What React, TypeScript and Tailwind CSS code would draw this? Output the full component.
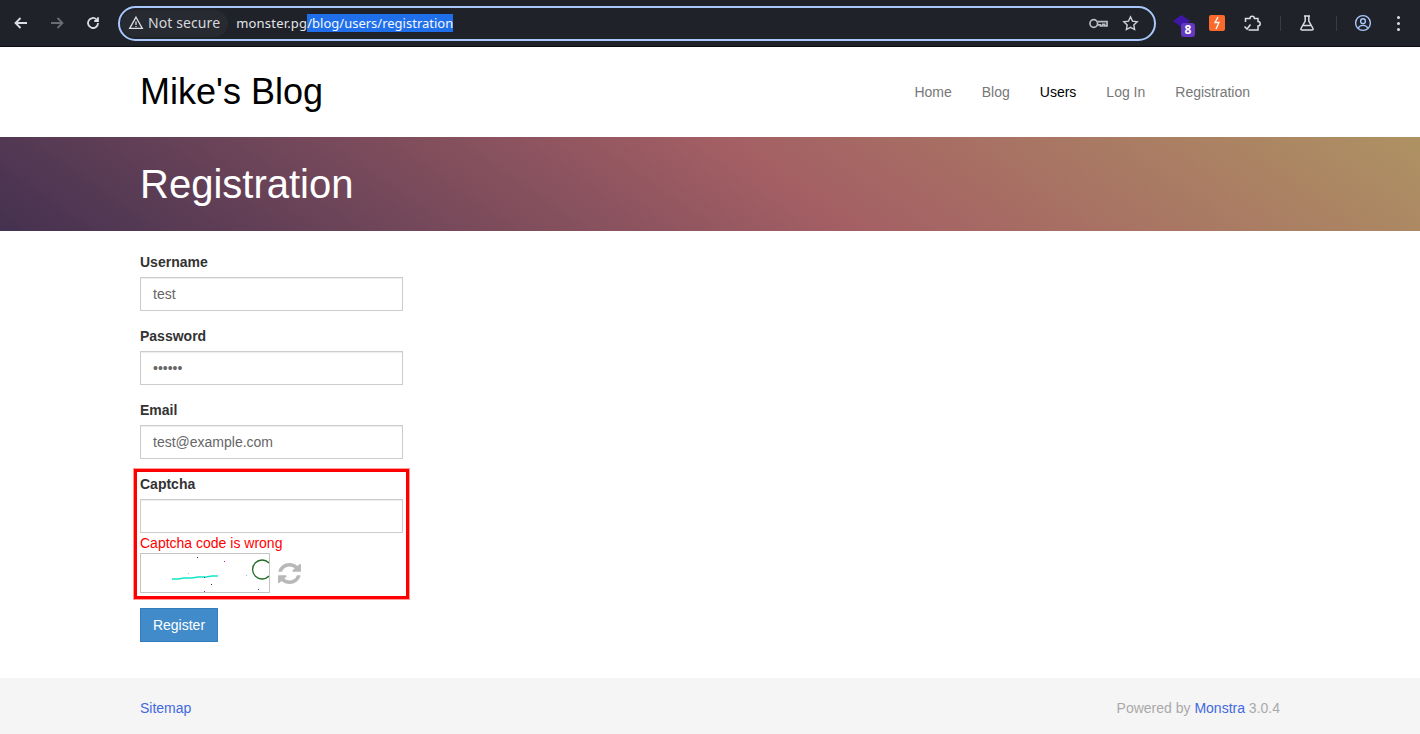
import React from "react";

const inputClass =
  "w-[263px] h-[34px] border border-[#cccccc] bg-white px-3 flex items-center text-[14px] text-[#666666] shadow-[inset_0_1px_1px_rgba(0,0,0,0.075)]";

const Field = ({ label, value }: { label: string; value: string }) => (
  <div className="mb-[15px]">
    <label className="block mb-[5px] font-bold text-[14px] leading-[20px] text-[#333333]">{label}</label>
    <div className={inputClass}>{value}</div>
  </div>
);

const IconBtn = ({ children }: { children: React.ReactNode }) => (
  <div className="w-5 h-5 flex items-center justify-center">{children}</div>
);

export default function App() {
  return (
    <div className="w-[1420px] h-[734px] overflow-hidden flex flex-col bg-white font-['Liberation_Sans',Arial,sans-serif]">
      {/* browser toolbar */}
      <div className="h-[47px] shrink-0 bg-[#1f2229] border-b border-[#0c0c0e] flex items-center font-['Noto_Sans',sans-serif]">
        <div className="flex items-center w-[118px] pl-[11px] gap-[16px]">
          <IconBtn>
            <svg width="16" height="16" viewBox="0 0 16 16" fill="none" stroke="#dcdee3" strokeWidth="1.8"><path d="M14 8H2.500M7.500 3l-5 5 5 5" /></svg>
          </IconBtn>
          <IconBtn>
            <svg width="16" height="16" viewBox="0 0 16 16" fill="none" stroke="#6b6d72" strokeWidth="1.8"><path d="M2 8h11.500M8.500 3l5 5-5 5" /></svg>
          </IconBtn>
          <IconBtn>
            <svg width="16" height="16" viewBox="0 0 16 16" fill="none" stroke="#dcdee3" strokeWidth="1.8"><path d="M13 8a5 5 0 1 1-1.600-3.700L13 6M13 2.200V6H9.300" /></svg>
          </IconBtn>
        </div>
        <div className="w-[1038px] h-[35px] rounded-full border-2 border-[#a8c7fa] flex items-center pl-[1px] pr-[14px]">
          <div className="h-[27px] rounded-full bg-[#272a31] flex items-center pl-[7px] pr-[8px]">
            <svg width="16" height="16" viewBox="0 0 16 16" fill="none" stroke="#dcdee3" strokeWidth="1.3"><path d="M8 2.200 14.300 13.400H1.700Z" /><path d="M8 6.500v3.500M8 11v1" /></svg>
            <span className="ml-[4px] text-[14px] leading-[20px] tracking-[0.1px] text-[#d6d8dd]">Not secure</span>
          </div>
          <span className="ml-[8px] text-[13px] leading-[18px] tracking-[0.2px] text-[#e3e5e9]">monster.pg</span>
          <span className="text-[13px] leading-[18px] text-[#f4f7ff] bg-[#1f6feb]">/blog/users/registration</span>
          <div className="ml-auto flex items-center gap-[14px] mr-[1px]">
            <svg width="19" height="13" viewBox="0 0 20 13" fill="none" stroke="#b8bbc1" strokeWidth="1.800"><circle cx="5" cy="6.500" r="4" /><path d="M9 4.500h10V9h-2.500V7.500h-2V9h-2.500V8H9" /></svg>
            <svg width="17" height="17" viewBox="0 0 16 16" fill="none" stroke="#cfd1d6" strokeWidth="1.300"><path d="m8 1.800 1.900 4 4.400.5-3.200 3 .8 4.400L8 11.600l-3.900 2.100.8-4.400-3.200-3 4.400-.5Z" /></svg>
          </div>
        </div>
        <div className="flex items-center ml-[17px]">
          <div className="relative w-[22px] h-[24px]">
            <svg width="17" height="13" viewBox="0 0 17 13" className="absolute left-0 top-[4px]"><path d="M8.500 0 17 6 8.500 12 0 6Z" fill="#3f16a8" /></svg>
            <div className="absolute left-[8px] top-[12px] w-[14px] h-[14px] rounded-[3px] bg-[#6637c2] text-white text-[12px] leading-[14px] font-bold text-center">8</div>
          </div>
          <div className="ml-[14px] w-4 h-4 rounded-[2px] bg-[#fb6a2c] flex items-center justify-center">
            <svg width="10" height="14" viewBox="0 0 10 14" fill="none" stroke="#fff" strokeWidth="1.300"><path d="M6 1 3 6.500h4L4 13" /></svg>
          </div>
          <svg width="20" height="20" viewBox="0 0 20 20" fill="none" stroke="#dcdee3" strokeWidth="1.500" className="ml-[17px]"><path d="M3.500 9V5.500h4.500a2.200 2.200 0 0 1 4.400 0H16V8.500a2.200 2.200 0 0 1 0 4.400V17H6.500" /><path d="M2.500 13.500 5 16l3.500-4.500" /></svg>
          <div className="ml-[18px] w-px h-[15px] bg-[#3a3c42]" />
          <svg width="18" height="18" viewBox="0 0 18 18" fill="none" stroke="#dcdee3" strokeWidth="1.500" className="ml-[17px]"><path d="M6 2h6M7.200 2v5L3 14.500c-.4.800.1 1.500 1 1.500h10c.9 0 1.400-.7 1-1.500L10.800 7V2M5.500 11.500h7" /></svg>
          <div className="ml-[20px] w-px h-[15px] bg-[#3a3c42]" />
          <svg width="18" height="18" viewBox="0 0 18 18" fill="none" stroke="#a8c7fa" strokeWidth="1.400" className="ml-[17px]"><circle cx="9" cy="9" r="7.400" /><circle cx="9" cy="7.200" r="2.400" /><path d="M4.200 14c1.200-2 3-2.600 4.800-2.600s3.600.6 4.800 2.600" /></svg>
          <div className="ml-[25px] flex flex-col gap-[3px]">
            <span className="w-[3px] h-[3px] rounded-full bg-[#dcdee3]" />
            <span className="w-[3px] h-[3px] rounded-full bg-[#dcdee3]" />
            <span className="w-[3px] h-[3px] rounded-full bg-[#dcdee3]" />
          </div>
        </div>
      </div>

      {/* site header */}
      <header className="h-[90px] shrink-0 pl-[140px] pr-[170px] flex items-center justify-between">
        <div className="text-[36px] leading-[40px] text-black">Mike's Blog</div>
        <nav className="flex gap-[30px] text-[14px] text-[#777777]">
          <span>Home</span>
          <span>Blog</span>
          <span className="text-black">Users</span>
          <span>Log In</span>
          <span>Registration</span>
        </nav>
      </header>

      {/* banner */}
      <div className="h-[94px] shrink-0 pl-[140px] flex items-center bg-[linear-gradient(35deg,#443150_0%,#a45f64_55%,#ae9263_100%)]">
        <h1 className="text-[40px] leading-[44px] text-white">Registration</h1>
      </div>

      {/* form */}
      <main className="flex-1 pl-[140px] pt-[21px]">
        <Field label="Username" value="test" />
        <Field label="Password" value="••••••" />
        <Field label="Email" value="test@example.com" />
        <div className="relative w-[263px] mb-[15px]">
          <div className="absolute left-[-6px] top-[-5px] w-[275px] h-[130px] border-[3px] border-[#ff0000] shadow-[0_0_0_1px_#ff9a9a]" />
          <label className="block mb-[5px] font-bold text-[14px] leading-[20px] text-[#333333]">Captcha</label>
          <div className={inputClass} />
          <div className="text-[14px] leading-[20px] text-[#ff0000]">Captcha code is wrong</div>
          <div className="flex items-center h-[40px]">
            <div className="w-[130px] h-[40px] border border-[#c4c4c4]">
              <svg width="128" height="38" viewBox="0 0 128 38">
                <path d="M31 25h6l6-1h8l6-1h8l6-1h6" stroke="#12e6c8" strokeWidth="1.300" fill="none" />
                <path d="M128 9a9.500 9.500 0 1 0 0 13" stroke="#1e6b24" strokeWidth="1.300" fill="none" />
                <g>
                  <rect x="56" y="3" width="1" height="1" fill="#401040" />
                  <rect x="83" y="7" width="1" height="1" fill="#d010a0" />
                  <rect x="47" y="19" width="1" height="1" fill="#f0a0c0" />
                  <rect x="105" y="21" width="1" height="1" fill="#80c0e0" />
                  <rect x="63" y="23" width="1" height="1" fill="#a01080" />
                  <rect x="70" y="30" width="1" height="1" fill="#203060" />
                  <rect x="63" y="37" width="1" height="1" fill="#c010a0" />
                  <rect x="117" y="35" width="1" height="1" fill="#1060e0" />
                </g>
              </svg>
            </div>
            <svg width="23" height="21" viewBox="128 128 1536 1536" preserveAspectRatio="none" fill="#b8b8b8" className="ml-[8px]">
              <path d="M1639 1056q0 5-1 7-64 268-268 434.500t-478 166.500q-146 0-282.500-55t-243.500-157l-129 129q-19 19-45 19t-45-19-19-45v-448q0-26 19-45t45-19h448q26 0 45 19t19 45-19 45l-137 137q71 66 161 102t187 36q134 0 250-65t186-179q11-17 53-117 8-23 30-23h192q13 0 22.500 9.500t9.500 22.500zm25-800v448q0 26-19 45t-45 19h-448q-26 0-45-19t-19-45 19-45l138-138q-148-137-349-137-134 0-250 65t-186 179q-11 17-53 117-8 23-30 23h-199q-13 0-22.500-9.500t-9.500-22.500v-7q65-268 270-434.500t480-166.500q146 0 284 55.500t245 156.500l130-129q19-19 45-19t45 19 19 45z" />
            </svg>
          </div>
        </div>
        <button className="w-[78px] h-[34px] bg-[#428bca] border border-[#357ebd] text-white text-[14px]">Register</button>
      </main>

      {/* footer */}
      <footer className="h-[56px] shrink-0 bg-[#f5f5f5] pl-[140px] pr-[140px] pt-[4px] flex items-center justify-between text-[14px]">
        <span className="text-[#4169e1]">Sitemap</span>
        <span className="text-[#a9a9a9]">Powered by <span className="text-[#4169e1]">Monstra</span> 3.0.4</span>
      </footer>
    </div>
  );
}
